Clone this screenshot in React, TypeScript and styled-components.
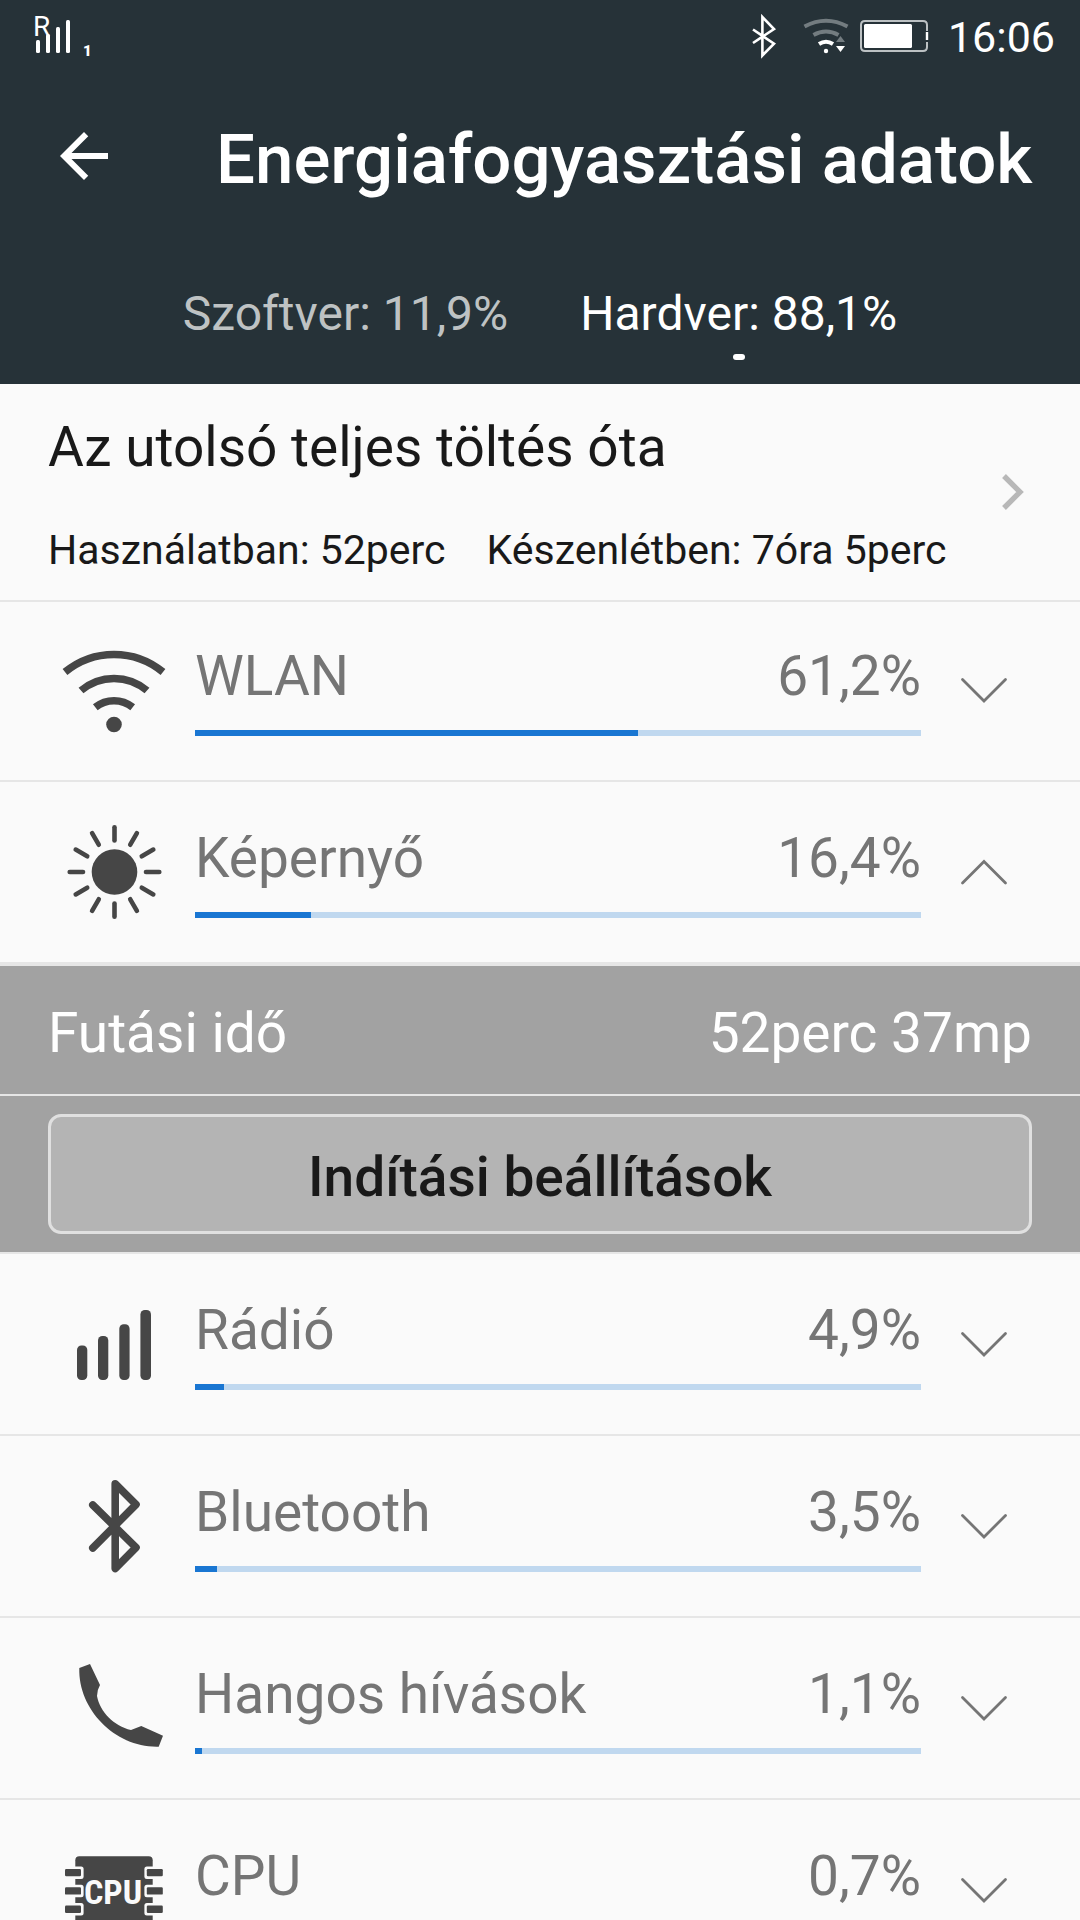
import React, { useState } from "react";
import styled, { createGlobalStyle, css } from "styled-components";

const color = {
  bar: "#263238",
  page: "#fafafa",
  divider: "#e6e6e6",
  text: "#191919",
  muted: "#757575",
  icon: "#464646",
  fill: "#1976d2",
  track: "#c0d8ef",
  panel: "#a2a2a2",
};

const GlobalStyle = createGlobalStyle`
  *, *::before, *::after { box-sizing: border-box; }
  body {
    margin: 0;
    background: ${color.page};
    font-family: Roboto, "Noto Sans", sans-serif;
  }
  h1, h2, p, ul, dl, dt, dd { margin: 0; padding: 0; font-weight: 400; }
  button { font: inherit; color: inherit; border: 0; background: none; padding: 0; cursor: pointer; }
  svg { display: block; flex: none; overflow: visible; }
`;

const Screen = styled.div`
  display: flex;
  flex-direction: column;
  height: 100vh;
  overflow: hidden;
`;

const Header = styled.header`
  flex: none;
  background: ${color.bar};
  color: #fff;
`;

const StatusBar = styled.div`
  display: flex;
  align-items: center;
  justify-content: space-between;
  height: 72px;
  padding: 0 25px 0 36px;
`;

const StatusIcons = styled.div`
  display: flex;
  align-items: center;
`;

const Clock = styled.time`
  margin-left: 18px;
  padding-top: 2px;
  font-size: 43px;
  line-height: 72px;
`;

const AppBar = styled.div`
  display: flex;
  align-items: center;
  gap: 96px;
  height: 168px;
  padding: 0 48px;
`;

const BackButton = styled.button`
  flex: none;
`;

const Title = styled.h1`
  && { font-weight: 500; }
  padding-top: 8px;
  font-size: 69px;
  line-height: 80px;
  white-space: nowrap;
`;

const Tabs = styled.div`
  display: flex;
  justify-content: center;
  gap: 72px;
  height: 144px;
  padding-top: 46px;
`;

const Tab = styled.button<{ $active: boolean }>`
  display: flex;
  flex-direction: column;
  align-items: center;
  gap: 12px;
  font-size: 48px;
  line-height: 56px;
  color: ${(p) => (p.$active ? "#fff" : "#bec2c3")};
  ${(p) =>
    p.$active &&
    css`
      &::after {
        content: "";
        width: 12px;
        height: 6px;
        border-radius: 3px;
        background: #fff;
      }
    `}
`;

const Summary = styled.button`
  flex: none;
  display: flex;
  align-items: center;
  justify-content: space-between;
  width: 100%;
  padding: 0 48px;
  text-align: left;
  color: ${color.text};
`;

const SummaryBody = styled.span`
  display: flex;
  flex-direction: column;
  gap: 47px;
  padding: 31px 0 26px;
`;

const SummaryTitle = styled.span`
  font-size: 55px;
  line-height: 64px;
`;

const SummaryTimes = styled.span`
  display: flex;
  gap: 41px;
  font-size: 41px;
  line-height: 48px;
  white-space: nowrap;
`;

const List = styled.ul`
  flex: 1;
  min-height: 0;
  overflow-y: auto;
  scrollbar-width: none;
  list-style: none;
  box-shadow: inset 0 2px ${color.divider};
`;

const Item = styled.li`
  border-bottom: 2px solid ${color.divider};
`;

const Row = styled.button`
  display: flex;
  align-items: center;
  width: 100%;
  height: 180px;
  padding: 0 72px 0 66px;
  color: ${color.muted};
  text-align: left;
`;

const Usage = styled.span`
  flex: 1;
  display: flex;
  flex-direction: column;
  gap: 22px;
  height: 100%;
  margin: 0 39px 0 33px;
  padding-top: 44px;
`;

const UsageText = styled.span`
  display: flex;
  justify-content: space-between;
  font-size: 55px;
  line-height: 64px;
`;

const Track = styled.span`
  display: block;
  height: 6px;
  background: ${color.track};
`;

const Fill = styled.span`
  display: block;
  height: 100%;
  background: ${color.fill};
`;

const Panel = styled.div`
  border-top: 4px solid ${color.divider};
  background: ${color.panel};
  color: #fff;
`;

const Runtime = styled.dl`
  display: flex;
  align-items: center;
  justify-content: space-between;
  height: 130px;
  padding: 6px 48px 0;
  border-bottom: 2px solid ${color.divider};
  font-size: 55px;
  line-height: 64px;
`;

const PanelActions = styled.div`
  display: flex;
  padding: 18px 48px;
`;

const SettingsButton = styled.button`
  && {
    flex: 1;
    height: 120px;
    padding-top: 6px;
    border: 3px solid #e0e0e0;
    border-radius: 13px;
    background: #b4b4b4;
    color: ${color.text};
    font-size: 55px;
    font-weight: 500;
    line-height: 64px;
  }
`;

const IconText = styled.text`
  font-family: Roboto, sans-serif;
`;

const ChipText = styled.text`
  font-family: "Roboto Condensed", Roboto, sans-serif;
  font-weight: 700;
`;

const RowIcon = ({ children }: { children: React.ReactNode }) => (
  <svg width="96" height="96" viewBox="0 0 96 96" fill={color.icon} aria-hidden="true">
    {children}
  </svg>
);

const WifiIcon = () => (
  <RowIcon>
    <g fill="none" stroke={color.icon} strokeWidth="7.5">
      <path d="M-1 30A77 77 0 0 1 97 30" />
      <path d="M15 48.5A51 51 0 0 1 81 48.5" />
      <path d="M29.3 65.2A30 30 0 0 1 66.7 65.2" />
    </g>
    <circle cx="48" cy="82.5" r="7.8" />
  </RowIcon>
);

const SunIcon = () => (
  <RowIcon>
    <circle cx="48.5" cy="48" r="22.8" />
    {Array.from({ length: 12 }, (_, i) => (
      <path
        key={i}
        d="M48.5 3.2V16.5"
        stroke={color.icon}
        strokeWidth="4.6"
        strokeLinecap="round"
        transform={`rotate(${i * 30} 48.5 48)`}
      />
    ))}
  </RowIcon>
);

const SignalIcon = () => (
  <RowIcon>
    <rect x="11" y="49.5" width="10.3" height="34.5" rx="4.4" />
    <rect x="32" y="40" width="10.3" height="44" rx="4.4" />
    <rect x="53.3" y="28.3" width="10.3" height="55.7" rx="4.4" />
    <rect x="74.4" y="14" width="10.6" height="70" rx="4.4" />
  </RowIcon>
);

const BluetoothIcon = () => (
  <RowIcon>
    <path
      d="M26.8 27L70 69.5L49.2 90.5V5.8L70 26.5L26.8 70"
      fill="none"
      stroke={color.icon}
      strokeWidth="7.6"
      strokeLinecap="round"
      strokeLinejoin="round"
    />
  </RowIcon>
);

const PhoneIcon = () => (
  <RowIcon>
    <path d="M13.3 8L24 4L34 25Q31 30 31 36C34 52 48 66 65 70L75.3 66L97 75.7L92.7 86.7C50 88 12 50 13.3 8Z" />
  </RowIcon>
);

const CpuIcon = () => (
  <RowIcon>
    <rect x="9.3" y="14.3" width="77.4" height="69.4" rx="4" />
    {[27, 45.3, 63.6].map((y) => (
      <g key={y}>
        <rect x="6" y={y - 2.5} width="11.6" height="12.4" rx="2.5" fill={color.page} />
        <rect x="78.4" y={y - 2.5} width="11.6" height="12.4" rx="2.5" fill={color.page} />
        <rect x="-1" y={y} width="16" height="7.3" rx="1.2" />
        <rect x="80.8" y={y} width="16" height="7.3" rx="1.2" />
      </g>
    ))}
    <ChipText x="47" y="62" textAnchor="middle" fontSize="34" fill={color.page}>
      CPU
    </ChipText>
  </RowIcon>
);

const Chevron = ({ up }: { up: boolean }) => (
  <svg width="48" height="48" viewBox="0 0 48 48" aria-hidden="true">
    <path
      d={up ? "M2.5 35L24 13.5L45.5 35" : "M2.5 13.5L24 35L45.5 13.5"}
      fill="none"
      stroke={color.muted}
      strokeWidth="2.8"
      strokeLinecap="round"
    />
  </svg>
);

type Entry = { name: string; value: string; percent: number; Icon: () => React.ReactElement };

const entries: Entry[] = [
  { name: "WLAN", value: "61,2%", percent: 61, Icon: WifiIcon },
  { name: "Képernyő", value: "16,4%", percent: 16, Icon: SunIcon },
  { name: "Rádió", value: "4,9%", percent: 4, Icon: SignalIcon },
  { name: "Bluetooth", value: "3,5%", percent: 3, Icon: BluetoothIcon },
  { name: "Hangos hívások", value: "1,1%", percent: 1, Icon: PhoneIcon },
  { name: "CPU", value: "0,7%", percent: 0, Icon: CpuIcon },
];

const CellSignal = () => (
  <svg width="60" height="72" viewBox="36 0 60 72" fill="#fff" aria-hidden="true">
    <rect x="36" y="40" width="4" height="13" rx="1.5" />
    <rect x="46" y="34" width="4" height="19" rx="1.5" />
    <rect x="56" y="27" width="4" height="26" rx="1.5" />
    <rect x="66" y="20" width="4" height="33" rx="1.5" />
    <IconText x="33" y="36" fontSize="28" fontWeight="400">R</IconText>
    <IconText x="83" y="56" fontSize="15" fontWeight="900">1</IconText>
  </svg>
);

const StatusGlyphs = () => (
  <svg width="178" height="72" viewBox="752 0 178 72" fill="none" aria-hidden="true">
    <path d="M753 29.5L774 43.7L762.4 55.5V17L774 29L753 43" stroke="#fff" strokeWidth="2.6" />
    <g strokeWidth="4">
      <path d="M804.5 26.5Q826 15 847.5 26.5" stroke="#737c80" />
      <path d="M813.5 35Q826 28 838.5 35" stroke="#737c80" />
      <path d="M819 44Q826 39.5 833 44" stroke="#fff" />
    </g>
    <circle cx="826" cy="51" r="2.2" fill="#fff" />
    <path d="M836 42L840.5 36L845 42Z" fill="#737c80" />
    <path d="M836 46H845L840.5 52Z" fill="#fff" />
    <path
      d="M927 31V25Q927 21 923 21H865Q861 21 861 25V47Q861 51 865 51H923Q927 51 927 47V42"
      stroke="#bcc1c3"
      strokeWidth="2"
    />
    <path d="M927 32V40" stroke="#fff" strokeWidth="2.4" />
    <rect x="864" y="24" width="48" height="24" rx="1.5" fill="#fff" />
  </svg>
);

export default function App() {
  const [open, setOpen] = useState("Képernyő");
  const [tab, setTab] = useState(1);

  return (
    <Screen>
      <GlobalStyle />
      <Header>
        <StatusBar>
          <CellSignal />
          <StatusIcons>
            <StatusGlyphs />
            <Clock>16:06</Clock>
          </StatusIcons>
        </StatusBar>
        <AppBar>
          <BackButton aria-label="Vissza">
            <svg width="72" height="72" viewBox="0 0 24 24" fill="#fff" aria-hidden="true">
              <path d="M20 11H7.83l5.59-5.59L12 4l-8 8 8 8 1.41-1.41L7.83 13H20v-2z" />
            </svg>
          </BackButton>
          <Title>Energiafogyasztási adatok</Title>
        </AppBar>
        <Tabs role="tablist">
          {["Szoftver: 11,9%", "Hardver: 88,1%"].map((label, i) => (
            <Tab key={label} role="tab" aria-selected={tab === i} $active={tab === i} onClick={() => setTab(i)}>
              {label}
            </Tab>
          ))}
        </Tabs>
      </Header>

      <Summary>
        <SummaryBody>
          <SummaryTitle>Az utolsó teljes töltés óta</SummaryTitle>
          <SummaryTimes>
            <span>Használatban: 52perc</span>
            <span>Készenlétben: 7óra 5perc</span>
          </SummaryTimes>
        </SummaryBody>
        <svg width="36" height="36" viewBox="0 0 36 36" aria-hidden="true">
          <path d="M8 2L24 18L8 34" fill="none" stroke="#b8b8b8" strokeWidth="5.4" />
        </svg>
      </Summary>

      <List>
        {entries.map(({ name, value, percent, Icon }) => {
          const expanded = open === name;
          return (
            <Item key={name}>
              <Row aria-expanded={expanded} onClick={() => setOpen(expanded ? "" : name)}>
                <Icon />
                <Usage>
                  <UsageText>
                    <span>{name}</span>
                    <span>{value}</span>
                  </UsageText>
                  <Track>
                    <Fill style={{ width: `${percent}%` }} />
                  </Track>
                </Usage>
                <Chevron up={expanded} />
              </Row>
              {expanded && (
                <Panel>
                  <Runtime>
                    <dt>Futási idő</dt>
                    <dd>52perc 37mp</dd>
                  </Runtime>
                  <PanelActions>
                    <SettingsButton>Indítási beállítások</SettingsButton>
                  </PanelActions>
                </Panel>
              )}
            </Item>
          );
        })}
      </List>
    </Screen>
  );
}
